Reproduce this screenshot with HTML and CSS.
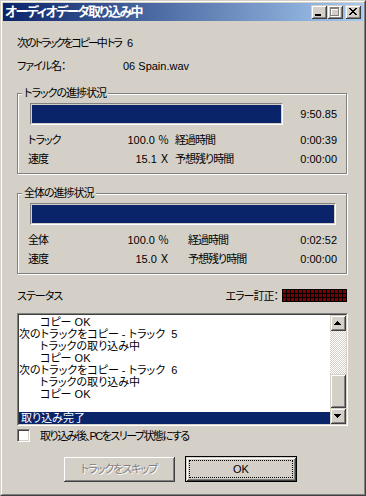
FILE: index.html
```html
<!DOCTYPE html>
<html lang="ja">
<head>
<meta charset="utf-8">
<link rel="stylesheet" href="styles.css">
</head>
<body>
<div class="window">
  <div class="frame">
    <div class="titlebar">
      <span class="title">オーディオデータ取り込み中</span>
      <div class="tbtns">
        <div class="tbtn raised">
          <svg width="16" height="14" viewBox="0 0 16 14" shape-rendering="crispEdges"><rect x="4" y="9" width="6" height="2" fill="#000"/></svg>
        </div>
        <div class="tbtn raised">
          <svg width="16" height="14" viewBox="0 0 16 14" shape-rendering="crispEdges">
            <path d="M4 3h9v9h-9z M5 5h7v6h-7z" fill="#fff" fill-rule="evenodd"/>
            <path d="M3 2h9v9h-9z M4 4h7v6h-7z" fill="#808080" fill-rule="evenodd"/>
          </svg>
        </div>
        <div class="tbtn raised close">
          <svg width="16" height="14" viewBox="0 0 16 14" shape-rendering="crispEdges" fill="#000">
            <path d="M4 3h2v1h-2z M5 4h2v1h-2z M6 5h2v1h-2z M7 6h2v1h-2z M6 7h2v1h-2z M5 8h2v1h-2z M4 9h2v1h-2z"/>
            <path d="M10 3h2v1h-2z M9 4h2v1h-2z M8 5h2v1h-2z M8 7h2v1h-2z M9 8h2v1h-2z M10 9h2v1h-2z"/>
          </svg>
        </div>
      </div>
    </div>

    <div class="content">
      <div class="info">
        <div class="irow"><span class="k1">次のトラックをコピー中 トラ</span><span class="num">6</span></div>
        <div class="irow"><span class="k2">ファイル名：</span><span class="num">06 Spain.wav</span></div>
      </div>

      <fieldset class="group g1">
        <legend>トラックの進捗状況</legend>
        <div class="gbody">
          <div class="barrow">
            <div class="bar"><div class="fill"></div></div>
            <span class="time num">9:50.85</span>
          </div>
          <div class="stats">
            <div class="pair"><span>トラック</span><span class="num">100.0 ％</span></div>
            <div class="pair"><span>経過時間</span><span class="num">0:00:39</span></div>
            <div class="pair"><span>速度</span><span class="num">15.1 Ｘ</span></div>
            <div class="pair"><span>予想残り時間</span><span class="num">0:00:00</span></div>
          </div>
        </div>
      </fieldset>

      <fieldset class="group g2">
        <legend>全体の進捗状況</legend>
        <div class="gbody">
          <div class="barrow">
            <div class="bar"><div class="fill"></div></div>
          </div>
          <div class="stats">
            <div class="pair"><span>全体</span><span class="num">100.0 ％</span></div>
            <div class="pair"><span>経過時間</span><span class="num">0:02:52</span></div>
            <div class="pair"><span>速度</span><span class="num">15.0 Ｘ</span></div>
            <div class="pair"><span>予想残り時間</span><span class="num">0:00:00</span></div>
          </div>
        </div>
      </fieldset>

      <div class="statusrow">
        <span>ステータス</span>
        <div class="ec"><span>エラー訂正：</span><div class="meter"></div></div>
      </div>

      <div class="listbox">
        <div class="listinner">
          <div class="items">
            <div class="item ind">コピー OK</div>
            <div class="item">次のトラックをコピー - トラック  5</div>
            <div class="item ind">トラックの取り込み中</div>
            <div class="item ind">コピー OK</div>
            <div class="item">次のトラックをコピー - トラック  6</div>
            <div class="item ind">トラックの取り込み中</div>
            <div class="item ind">コピー OK</div>
            <div class="item"> </div>
            <div class="item sel">取り込み完了</div>
          </div>
          <div class="sb">
            <div class="sbbtn raised">
              <svg width="16" height="16" viewBox="0 0 16 16" shape-rendering="crispEdges" fill="#000"><path d="M7 6h1v1h-1z M6 7h3v1h-3z M5 8h5v1h-5z M4 9h7v1h-7z"/></svg>
            </div>
            <div class="track"></div>
            <div class="thumb raised"></div>
            <div class="sbbtn raised">
              <svg width="16" height="16" viewBox="0 0 16 16" shape-rendering="crispEdges" fill="#000"><path d="M4 6h7v1h-7z M5 7h5v1h-5z M6 8h3v1h-3z M7 9h1v1h-1z"/></svg>
            </div>
          </div>
        </div>
      </div>

      <div class="checkrow">
        <span class="checkbox"></span>
        <span class="cblabel">取り込み後、PCをスリープ状態にする</span>
      </div>

      <div class="buttons">
        <div class="btn raised disabled">トラックをスキップ</div>
        <div class="btn default"><div class="inner raised"><div class="focus num">OK</div></div></div>
      </div>
    </div>
  </div>
</div>
</body>
</html>
```

FILE: styles.css
```css
* { box-sizing: border-box; }
html, body { margin: 0; padding: 0; background: #D4D0C8; }
body {
  font-family: "Liberation Sans", "Noto Sans CJK JP", sans-serif;
  font-size: 11px;
  color: #000;
  font-feature-settings: "palt";
  letter-spacing: -1px;
}
.num { letter-spacing: 0; }

.window {
  width: 366px;
  height: 496px;
  border: 1px solid;
  border-color: #D4D0C8 #404040 #404040 #D4D0C8;
}
.frame {
  height: 100%;
  border: 1px solid;
  border-color: #fff #808080 #808080 #fff;
  padding: 1px;
  display: flex;
  flex-direction: column;
}

.raised {
  background: #D4D0C8;
  box-shadow: inset 1px 1px 0 #D4D0C8, inset -1px -1px 0 #404040, inset 2px 2px 0 #fff, inset -2px -2px 0 #808080;
}

.titlebar {
  height: 18px;
  flex: none;
  background: linear-gradient(to right, #0A246A, #A6CAF0);
  display: flex;
  align-items: center;
  padding: 0 2px;
}
.title {
  color: #fff;
  font-weight: bold;
  font-size: 13px;
  line-height: 18px;
  letter-spacing: -1.6px;
}
.tbtns { margin-left: auto; display: flex; }
.tbtn { width: 16px; height: 14px; }
.tbtn svg { display: block; }
.tbtn.close { margin-left: 2px; }

.content {
  flex: 1;
  padding: 0 15px 0 14px;
  display: flex;
  flex-direction: column;
}

.info { margin-top: 15px; }
.irow { display: flex; height: 14px; line-height: 14px; white-space: nowrap; }
.irow + .irow { margin-top: 9px; }
.k1 { width: 110px; flex: none; letter-spacing: -2px; }
.k2 { width: 106px; flex: none; }

.group {
  margin: 13px 1px 0 0;
  padding: 0;
  min-width: 0;
  border: 1px solid #808080;
  box-shadow: 1px 1px 0 #fff, inset 1px 1px 0 #fff;
}
.group legend {
  margin-left: 4px;
  padding: 0 2px;
  height: 14px;
  line-height: 14px;
  background: #D4D0C8;
}
.g2 { margin-top: 12px; }
.gbody { padding: 0 8px 5px 10px; }
.barrow { display: flex; align-items: center; margin-top: 3px; height: 22px; }
.bar {
  height: 22px;
  border: 1px solid;
  border-color: #808080 #fff #fff #808080;
  padding: 1px;
}
.fill { height: 100%; background: #0A246A; }
.g1 .bar { width: 253px; margin-left: 2px; }
.g2 .bar { flex: 1; margin: 0 2px; }
.time { margin-left: auto; margin-right: 1px; line-height: 14px; }

.stats {
  display: grid;
  margin-top: 5px;
  grid-auto-rows: 19px;
  align-items: center;
  line-height: 14px;
}
.g1 .stats { grid-template-columns: 141px 162px; column-gap: 6px; }
.g2 .stats { grid-template-columns: 141px 149px; column-gap: 19px; }
.pair { display: flex; justify-content: space-between; white-space: nowrap; }

.statusrow {
  display: flex;
  align-items: center;
  margin-top: 15px;
  height: 13px;
  line-height: 14px;
  margin-right: 1px;
}
.ec { margin-left: auto; display: flex; align-items: center; }
.meter {
  width: 65px;
  height: 13px;
  margin-left: 4px;
  background:
    repeating-linear-gradient(to right, #000 0 1px, transparent 1px 4px),
    repeating-linear-gradient(to bottom, #000 0 1px, transparent 1px 4px),
    #800000;
}

.listbox {
  margin-top: 11px;
  height: 113px;
  border: 1px solid;
  border-color: #808080 #fff #fff #808080;
  display: flex;
}
.listinner {
  flex: 1;
  display: flex;
  border: 1px solid;
  border-color: #404040 #D4D0C8 #D4D0C8 #404040;
  background: #fff;
}
.items { flex: 1; padding-top: 1px; overflow: hidden; letter-spacing: 0; }
.item { height: 12px; line-height: 12px; white-space: pre; padding-left: 0; }
.item.ind { padding-left: 21px; }
.item.sel { background: #0A246A; color: #fff; padding-left: 2px; }

.sb { width: 16px; display: flex; flex-direction: column; }
.sbbtn { height: 16px; flex: none; }
.sbbtn svg { display: block; }
.track {
  flex: 1;
  background: repeating-conic-gradient(#fff 0 25%, #D4D0C8 0 50%) 0 0 / 2px 2px;
}
.thumb { height: 34px; flex: none; }

.checkrow {
  display: flex;
  align-items: center;
  margin-top: 3px;
  height: 13px;
  line-height: 14px;
  white-space: nowrap;
}
.cblabel { letter-spacing: -1.5px; }
.checkbox {
  width: 13px;
  height: 13px;
  margin-right: 10px;
  border: 1px solid;
  border-color: #808080 #fff #fff #808080;
  background: #fff;
  box-shadow: inset 1px 1px 0 #404040, inset -1px -1px 0 #D4D0C8;
}

.buttons { display: flex; margin-top: 14px; padding-left: 46px; column-gap: 10px; }
.btn {
  width: 112px;
  height: 26px;
  display: flex;
  align-items: center;
  justify-content: center;
  line-height: 14px;
}
.btn.disabled { color: #808080; text-shadow: 1px 1px 0 #fff; }
.btn.default { border: 1px solid #000; padding: 0; align-items: stretch; justify-content: stretch; }
.btn.default .inner { flex: 1; padding: 3px; display: flex; }
.focus {
  flex: 1;
  border: 1px dotted #000;
  display: flex;
  align-items: center;
  justify-content: center;
}
```
